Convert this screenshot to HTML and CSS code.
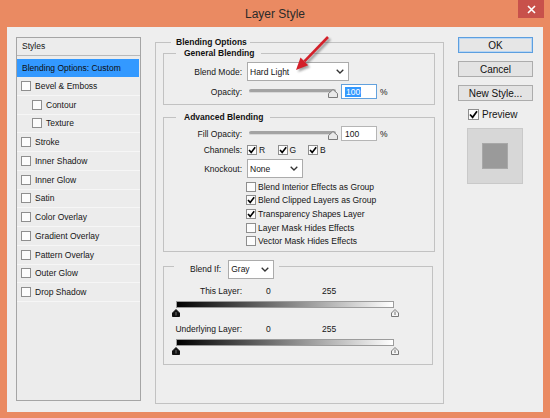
FILE: index.html
```html
<!DOCTYPE html>
<html>
<head>
<meta charset="utf-8">
<title>Layer Style</title>
<link rel="stylesheet" href="styles.css">
</head>
<body>
<div class="window">
  <div class="titlebar">
    <span class="title">Layer Style</span>
    <span class="close"><svg width="9" height="9" viewBox="0 0 9 9"><path d="M1 1 L8 8 M8 1 L1 8" stroke="#fff" stroke-width="1.6"/></svg></span>
  </div>
  <div class="dialog">
    <div class="styles-panel">
      <div class="panel-head">Styles</div>
      <div class="row selected">Blending Options: Custom</div>
      <div class="row"><span class="cb"></span>Bevel &amp; Emboss</div>
      <div class="row sub"><span class="cb"></span>Contour</div>
      <div class="row sub"><span class="cb"></span>Texture</div>
      <div class="row"><span class="cb"></span>Stroke</div>
      <div class="row"><span class="cb"></span>Inner Shadow</div>
      <div class="row"><span class="cb"></span>Inner Glow</div>
      <div class="row"><span class="cb"></span>Satin</div>
      <div class="row"><span class="cb"></span>Color Overlay</div>
      <div class="row"><span class="cb"></span>Gradient Overlay</div>
      <div class="row"><span class="cb"></span>Pattern Overlay</div>
      <div class="row"><span class="cb"></span>Outer Glow</div>
      <div class="row"><span class="cb"></span>Drop Shadow</div>
    </div>

    <fieldset class="group outer">
      <legend class="outer-legend">Blending Options</legend>
      <div class="outer-body">
        <fieldset class="group general">
          <legend class="sub-legend">General Blending</legend>
          <div class="form general-form">
            <span class="lbl">Blend Mode:</span>
            <div class="select mode"><span>Hard Light</span><svg class="chev" width="8" height="5" viewBox="0 0 8 5"><polyline points="0.7,0.7 4,4 7.3,0.7" fill="none" stroke="#333" stroke-width="1.3"/></svg></div>
            <span class="lbl">Opacity:</span>
            <div class="slider-line">
              <div class="slider"><div class="track"></div><svg class="knob" width="10" height="9" viewBox="0 0 10 9"><path d="M0.5 8.5 V4.5 L5 0.5 L9.5 4.5 V8.5 Z" fill="#e9e9e9" stroke="#7a7a7a"/></svg></div>
              <div class="num focus"><span class="sel">100</span></div>
              <span class="pct">%</span>
            </div>
          </div>
        </fieldset>

        <fieldset class="group advanced">
          <legend class="sub-legend">Advanced Blending</legend>
          <div class="form adv-form">
            <span class="lbl">Fill Opacity:</span>
            <div class="slider-line">
              <div class="slider"><div class="track"></div><svg class="knob" width="10" height="9" viewBox="0 0 10 9"><path d="M0.5 8.5 V4.5 L5 0.5 L9.5 4.5 V8.5 Z" fill="#e9e9e9" stroke="#7a7a7a"/></svg></div>
              <div class="num"><span>100</span></div>
              <span class="pct">%</span>
            </div>
            <span class="lbl">Channels:</span>
            <div class="channels">
              <span class="ch"><span class="cb on"><svg width="8" height="8" viewBox="0 0 8 8"><path d="M1 4 L3.2 6.4 L7.2 1.2" fill="none" stroke="#000" stroke-width="1.6"/></svg></span>R</span>
              <span class="ch"><span class="cb on"><svg width="8" height="8" viewBox="0 0 8 8"><path d="M1 4 L3.2 6.4 L7.2 1.2" fill="none" stroke="#000" stroke-width="1.6"/></svg></span>G</span>
              <span class="ch"><span class="cb on"><svg width="8" height="8" viewBox="0 0 8 8"><path d="M1 4 L3.2 6.4 L7.2 1.2" fill="none" stroke="#000" stroke-width="1.6"/></svg></span>B</span>
            </div>
            <span class="lbl">Knockout:</span>
            <div class="select knock"><span>None</span><svg class="chev" width="8" height="5" viewBox="0 0 8 5"><polyline points="0.7,0.7 4,4 7.3,0.7" fill="none" stroke="#333" stroke-width="1.3"/></svg></div>
            <span></span>
            <div class="checklist">
              <div class="ck"><span class="cb"></span>Blend Interior Effects as Group</div>
              <div class="ck"><span class="cb on"><svg width="8" height="8" viewBox="0 0 8 8"><path d="M1 4 L3.2 6.4 L7.2 1.2" fill="none" stroke="#000" stroke-width="1.6"/></svg></span>Blend Clipped Layers as Group</div>
              <div class="ck"><span class="cb on"><svg width="8" height="8" viewBox="0 0 8 8"><path d="M1 4 L3.2 6.4 L7.2 1.2" fill="none" stroke="#000" stroke-width="1.6"/></svg></span>Transparency Shapes Layer</div>
              <div class="ck"><span class="cb"></span>Layer Mask Hides Effects</div>
              <div class="ck"><span class="cb"></span>Vector Mask Hides Effects</div>
            </div>
          </div>
        </fieldset>

        <fieldset class="group blendif">
          <legend class="if-legend">
            <span class="if-label">Blend If:</span>
            <div class="select gray"><span>Gray</span><svg class="chev" width="8" height="5" viewBox="0 0 8 5"><polyline points="0.7,0.7 4,4 7.3,0.7" fill="none" stroke="#333" stroke-width="1.3"/></svg></div>
          </legend>
          <div class="if-body">
            <div class="range-row"><span class="rlbl">This Layer:</span><span class="v0">0</span><span>255</span></div>
            <div class="gbar"></div>
            <div class="thumbs">
              <svg width="8" height="8" viewBox="0 0 8 8"><path d="M0.5 7.5 V4 L4 0.5 L7.5 4 V7.5 Z" fill="#111" stroke="#111"/><path d="M4 3 V6.5" stroke="#888" stroke-width="0.8"/></svg>
              <svg width="8" height="8" viewBox="0 0 8 8"><path d="M0.5 7.5 V4 L4 0.5 L7.5 4 V7.5 Z" fill="#f4f4f4" stroke="#777"/><path d="M4 2.5 V6" stroke="#555" stroke-width="0.8"/></svg>
            </div>
            <div class="range-row second"><span class="rlbl">Underlying Layer:</span><span class="v0">0</span><span>255</span></div>
            <div class="gbar"></div>
            <div class="thumbs">
              <svg width="8" height="8" viewBox="0 0 8 8"><path d="M0.5 7.5 V4 L4 0.5 L7.5 4 V7.5 Z" fill="#111" stroke="#111"/><path d="M4 3 V6.5" stroke="#888" stroke-width="0.8"/></svg>
              <svg width="8" height="8" viewBox="0 0 8 8"><path d="M0.5 7.5 V4 L4 0.5 L7.5 4 V7.5 Z" fill="#f4f4f4" stroke="#777"/><path d="M4 2.5 V6" stroke="#555" stroke-width="0.8"/></svg>
            </div>
          </div>
        </fieldset>
      </div>
    </fieldset>

    <div class="actions">
      <div class="btn default">OK</div>
      <div class="btn">Cancel</div>
      <div class="btn">New Style...</div>
      <div class="preview-row"><span class="cb big on"><svg width="9" height="9" viewBox="0 0 9 9"><path d="M1 4.5 L3.6 7.3 L8 1.3" fill="none" stroke="#000" stroke-width="1.7"/></svg></span><span>Preview</span></div>
      <div class="preview-box"><div class="swatch"></div></div>
    </div>
  </div>

  <svg class="arrow" width="50" height="50" viewBox="0 0 50 50">
    <defs><filter id="sh" x="-20%" y="-20%" width="140%" height="140%"><feGaussianBlur stdDeviation="1"/></filter></defs>
    <g transform="translate(2,2)" filter="url(#sh)" opacity="0.45">
      <path d="M43 7 L19.4 31.4" stroke="#333" stroke-width="2.6"/>
      <path d="M11 40 L23.2 35.2 L15.5 27.6 Z" fill="#333"/>
    </g>
    <path d="M43 7 L19.4 31.4" stroke="#D3202A" stroke-width="2.6"/>
    <path d="M11 40 L23.2 35.2 L15.5 27.6 Z" fill="#D3202A"/>
  </svg>
</div>
</body>
</html>
```

FILE: styles.css
```css
html, body {
  margin: 0;
  padding: 0;
}

body {
  width: 550px;
  height: 418px;
  overflow: hidden;
  background: #ffffff;
  font-family: "Liberation Sans", Arial, sans-serif;
  font-size: 8.5px;
  color: #151515;
}

.window {
  position: relative;
  width: 550px;
  height: 418px;
  background: #EA8A62;
  display: flex;
  flex-direction: column;
  box-sizing: border-box;
}

.titlebar {
  position: relative;
  height: 27px;
  flex: none;
  display: flex;
  align-items: center;
  justify-content: center;
}

.title {
  font-size: 12px;
  color: #2a2a2a;
  margin-top: 1px;
}

.close {
  position: absolute;
  right: 6px;
  top: 0;
  width: 26px;
  height: 18px;
  background: #C8514B;
  display: flex;
  align-items: center;
  justify-content: center;
}

.dialog {
  flex: 1;
  margin: 0 7px 6px 7px;
  background: #EEEEEE;
  display: flex;
  align-items: flex-start;
  padding: 9px 0 0 9px;
}

/* ---------- styles list ---------- */
.styles-panel {
  width: 125px;
  height: 364px;
  margin-top: 1px;
  box-sizing: border-box;
  border: 1px solid #A5A5A5;
  background: #ECECEC;
  flex: none;
}

.panel-head {
  height: 17px;
  line-height: 17px;
  padding-left: 5px;
  border-bottom: 1px solid #B9B9B9;
}

.row {
  height: 18.75px;
  box-sizing: border-box;
  display: flex;
  align-items: center;
  gap: 4px;
  padding-left: 4px;
  border-bottom: 1px solid #F6F6F6;
}

.row.sub {
  padding-left: 15px;
}

.row.selected {
  margin: 3px 1px 0 0;
  height: 18px;
  padding-left: 5px;
  background: #3399FF;
  border-bottom: none;
  color: #0d0d0d;
}

.cb {
  width: 10px;
  height: 10px;
  box-sizing: border-box;
  border: 1px solid #8E8E8E;
  background: #FCFCFC;
  display: inline-flex;
  align-items: center;
  justify-content: center;
  flex: none;
}

.cb.big {
  width: 11px;
  height: 11px;
}

/* ---------- group boxes ---------- */
.group {
  margin: 0;
  padding: 0;
  border: 1px solid #C2C2C2;
  min-width: 0;
  box-sizing: border-box;
}

.outer {
  margin-left: 14px;
  width: 289px;
  height: 368px;
  flex: none;
}

.outer-legend,
.sub-legend {
  font-weight: bold;
  line-height: 12px;
  color: #111;
}

.outer-legend {
  margin-left: 15px;
  padding: 0 3px 0 5px;
}

.outer-body {
  padding: 0 8px 0 7px;
}

.general {
  margin-top: -1px;
}

.sub-legend {
  margin-left: 12px;
  padding: 0 7px 0 8px;
}

.form {
  display: grid;
  grid-template-columns: 78px auto;
  column-gap: 5px;
  row-gap: 3px;
  align-items: center;
  justify-items: start;
}

.general-form {
  padding: 3px 0 5px 0;
}

.adv-form {
  padding: 3px 0 3px 0;
}

.lbl {
  justify-self: end;
  line-height: 12px;
}

.select {
  height: 19px;
  box-sizing: border-box;
  border: 1px solid #ABABAB;
  background: #FFFFFF;
  display: flex;
  align-items: center;
  justify-content: space-between;
  padding: 0 4px 0 2px;
}

.select.mode { width: 102px; }
.select.knock { width: 56px; }
.select.gray { width: 46px; }

.chev { flex: none; }

.slider-line {
  display: flex;
  align-items: center;
  height: 15px;
}

.slider {
  position: relative;
  width: 91px;
  height: 15px;
}

.track {
  margin: 5px 0 0 2px;
  width: 87px;
  height: 3px;
  border-radius: 2px;
  background: #A3A3A3;
  border-bottom: 1px solid #D8D8D8;
}

.knob {
  position: absolute;
  left: 81px;
  top: 5px;
}

.num {
  margin-left: 3px;
  width: 36px;
  height: 15px;
  box-sizing: border-box;
  border: 1px solid #B5B5B5;
  background: #FFFFFF;
  display: flex;
  align-items: center;
  padding-left: 3px;
}

.num.focus {
  border-color: #62A1DD;
}

.sel {
  background: #3399FF;
  color: #FFFFFF;
  line-height: 10px;
  padding: 0 1px;
}

.pct {
  margin-left: 3px;
}

.advanced {
  margin-top: 6px;
}

.channels {
  display: flex;
  height: 12px;
  align-items: center;
}

.ch {
  display: flex;
  align-items: center;
  gap: 2px;
  width: 30.5px;
}

.checklist {
  margin-top: -1px;
  margin-left: -1px;
}

.ck {
  height: 13.6px;
  display: flex;
  align-items: center;
  gap: 2px;
}

/* ---------- blend if ---------- */
.blendif {
  margin-top: 8px;
  margin-right: 2px;
}

.if-legend {
  display: flex;
  align-items: flex-start;
  margin-left: 10px;
  padding: 0 5px 0 16px;
}

.if-label {
  line-height: 19px;
  margin-bottom: -6px;
  margin-right: 7px;
}

.if-legend .select {
  margin-bottom: -6px;
}

.if-body {
  padding: 12px 0 9px 0;
}

.range-row {
  display: flex;
  line-height: 12px;
}

.range-row.second {
  margin-top: 6px;
}

.rlbl {
  width: 78px;
  text-align: right;
}

.v0 {
  margin-left: 24px;
  width: 56px;
}

.gbar {
  margin: 4px 0 0 12px;
  width: 218px;
  height: 7px;
  box-sizing: border-box;
  border: 1px solid #9C9C9C;
  background: linear-gradient(to right, #000000, #ffffff);
}

.thumbs {
  margin: 1px 0 0 8px;
  width: 227px;
  height: 8px;
  display: flex;
  justify-content: space-between;
}

/* ---------- buttons ---------- */
.actions {
  margin-left: 14px;
  margin-top: 1px;
  width: 75px;
  flex: none;
  font-size: 10px;
}

.btn {
  height: 16px;
  box-sizing: border-box;
  border: 1px solid #ACACAC;
  background: #E3E3E3;
  display: flex;
  align-items: center;
  justify-content: center;
  color: #111;
}

.btn + .btn {
  margin-top: 8px;
}

.btn.default {
  border-color: #5C9FE0;
  box-shadow: inset 0 0 0 1px #B9D6F3;
  background: #E6E6E6;
}

.preview-row {
  margin-top: 8px;
  padding-left: 10px;
  display: flex;
  align-items: center;
  gap: 3px;
  height: 11px;
}

.preview-box {
  margin: 8px 0 0 9px;
  width: 56px;
  height: 56px;
  box-sizing: border-box;
  border: 1px solid #C9C9C9;
  background: #D7D7D7;
  display: flex;
  align-items: center;
  justify-content: center;
}

.swatch {
  width: 26px;
  height: 26px;
  box-sizing: border-box;
  border: 1px solid #A8A8A8;
  background: #9A9A9A;
}

.arrow {
  position: absolute;
  left: 285px;
  top: 30px;
}
```
